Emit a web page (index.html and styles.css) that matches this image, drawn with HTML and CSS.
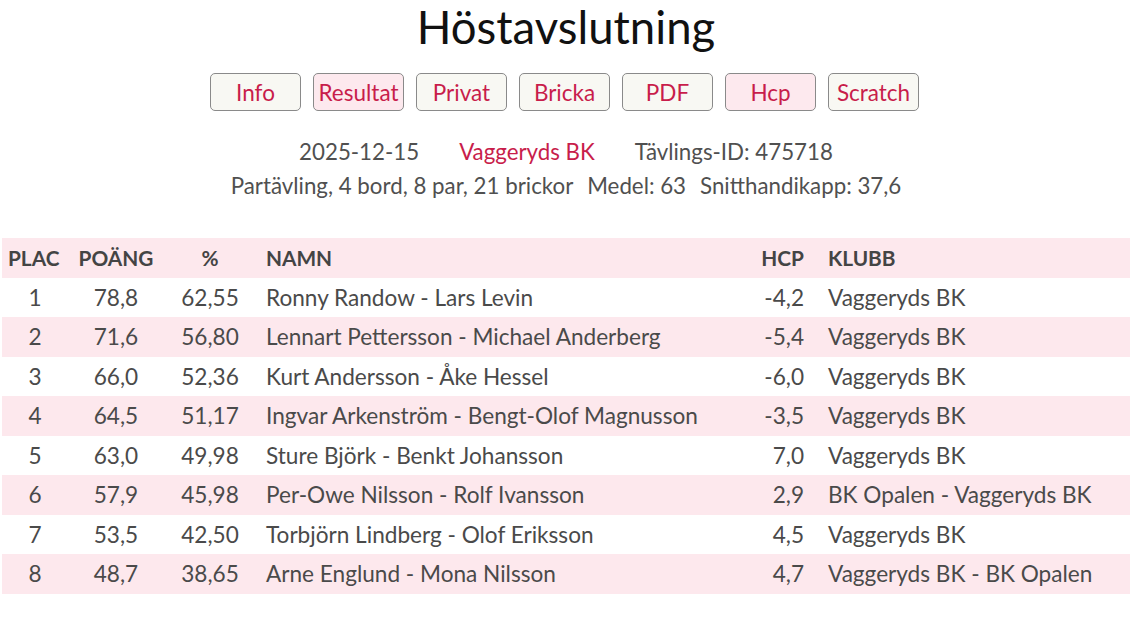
FILE: index.html
```html
<!DOCTYPE html>
<html lang="sv">
<head>
<meta charset="utf-8">
<title>Höstavslutning</title>
<link rel="stylesheet" href="styles.css">
</head>
<body>
<div class="page">
  <h1 class="title">Höstavslutning</h1>
  <nav class="tabs">
    <a class="tab">Info</a>
    <a class="tab active">Resultat</a>
    <a class="tab">Privat</a>
    <a class="tab">Bricka</a>
    <a class="tab">PDF</a>
    <a class="tab active">Hcp</a>
    <a class="tab">Scratch</a>
  </nav>
  <div class="meta">
    <div class="meta-line">
      <span>2025-12-15</span>
      <span class="club">Vaggeryds BK</span>
      <span>Tävlings-ID: 475718</span>
    </div>
    <div class="meta-line small-gap">
      <span>Partävling, 4 bord, 8 par, 21 brickor</span>
      <span>Medel: 63</span>
      <span>Snitthandikapp: 37,6</span>
    </div>
  </div>
  <table class="results">
    <colgroup>
      <col class="c-plac"><col class="c-poang"><col class="c-pct"><col class="c-namn"><col class="c-hcp"><col class="c-klubb">
    </colgroup>
    <thead>
      <tr><th class="ctr">PLAC</th><th class="ctr">POÄNG</th><th class="ctr">%</th><th class="lft">NAMN</th><th class="rgt">HCP</th><th class="lft klubb">KLUBB</th></tr>
    </thead>
    <tbody>
      <tr><td class="ctr">1</td><td class="ctr">78,8</td><td class="ctr">62,55</td><td class="lft">Ronny Randow - Lars Levin</td><td class="rgt">-4,2</td><td class="lft klubb">Vaggeryds BK</td></tr>
      <tr><td class="ctr">2</td><td class="ctr">71,6</td><td class="ctr">56,80</td><td class="lft">Lennart Pettersson - Michael Anderberg</td><td class="rgt">-5,4</td><td class="lft klubb">Vaggeryds BK</td></tr>
      <tr><td class="ctr">3</td><td class="ctr">66,0</td><td class="ctr">52,36</td><td class="lft">Kurt Andersson - Åke Hessel</td><td class="rgt">-6,0</td><td class="lft klubb">Vaggeryds BK</td></tr>
      <tr><td class="ctr">4</td><td class="ctr">64,5</td><td class="ctr">51,17</td><td class="lft">Ingvar Arkenström - Bengt-Olof Magnusson</td><td class="rgt">-3,5</td><td class="lft klubb">Vaggeryds BK</td></tr>
      <tr><td class="ctr">5</td><td class="ctr">63,0</td><td class="ctr">49,98</td><td class="lft">Sture Björk - Benkt Johansson</td><td class="rgt">7,0</td><td class="lft klubb">Vaggeryds BK</td></tr>
      <tr><td class="ctr">6</td><td class="ctr">57,9</td><td class="ctr">45,98</td><td class="lft">Per-Owe Nilsson - Rolf Ivansson</td><td class="rgt">2,9</td><td class="lft klubb">BK Opalen - Vaggeryds BK</td></tr>
      <tr><td class="ctr">7</td><td class="ctr">53,5</td><td class="ctr">42,50</td><td class="lft">Torbjörn Lindberg - Olof Eriksson</td><td class="rgt">4,5</td><td class="lft klubb">Vaggeryds BK</td></tr>
      <tr><td class="ctr">8</td><td class="ctr">48,7</td><td class="ctr">38,65</td><td class="lft">Arne Englund - Mona Nilsson</td><td class="rgt">4,7</td><td class="lft klubb">Vaggeryds BK - BK Opalen</td></tr>
    </tbody>
  </table>
</div>
</body>
</html>
```

FILE: styles.css
```css
html, body {
  margin: 0;
  padding: 0;
  background: #ffffff;
}

body {
  font-family: Lato, "Open Sans", "Liberation Sans", sans-serif;
  color: #4a4a4a;
}

.page {
  padding: 0 4px 0 2px;
}

.title {
  margin: 0;
  padding-top: 1px;
  height: 52px;
  font-size: 45.5px;
  font-weight: 400;
  line-height: 52px;
  text-align: center;
  color: #111;
}

.tabs {
  display: flex;
  justify-content: center;
  gap: 12px;
  margin-top: 20px;
  padding-right: 3px;
}

.tab {
  box-sizing: border-box;
  width: 91px;
  height: 38px;
  display: flex;
  align-items: center;
  justify-content: center;
  border: 1.5px solid #8a8a8a;
  border-radius: 5px;
  background: #f8f8f3;
  color: #c81d4b;
  font-size: 22.5px;
  cursor: pointer;
}

.tab.active {
  background: #fde9ee;
}

.meta {
  margin-top: 24px;
  text-align: center;
  font-size: 22.3px;
  color: #505050;
}

.meta-line {
  display: flex;
  justify-content: center;
  gap: 40px;
  height: 34px;
  line-height: 34px;
}

.meta-line.small-gap {
  gap: 14px;
}

.club {
  color: #c81d4b;
}

.results {
  margin-top: 35px;
  width: 100%;
  border-collapse: collapse;
  table-layout: fixed;
  font-size: 22.6px;
  color: #4a4a4a;
}

.c-plac { width: 66px; }
.c-poang { width: 96px; }
.c-pct { width: 92px; }
.c-namn { width: 488px; }
.c-hcp { width: 74px; }
.c-klubb { width: auto; }

.results th,
.results td {
  height: 39.5px;
  padding: 0 10px;
  white-space: nowrap;
}

.results th {
  font-size: 20.8px;
  font-weight: 700;
  color: #444;
}

.results th:first-child {
  padding-left: 6px;
}

.results thead tr,
.results tbody tr:nth-child(even) {
  background: #fde8ed;
}

.ctr { text-align: center; }
.lft { text-align: left; }
.rgt { text-align: right; }

.results .rgt {
  padding-right: 14px;
}

.results .klubb {
  padding-left: 10px;
}
```
